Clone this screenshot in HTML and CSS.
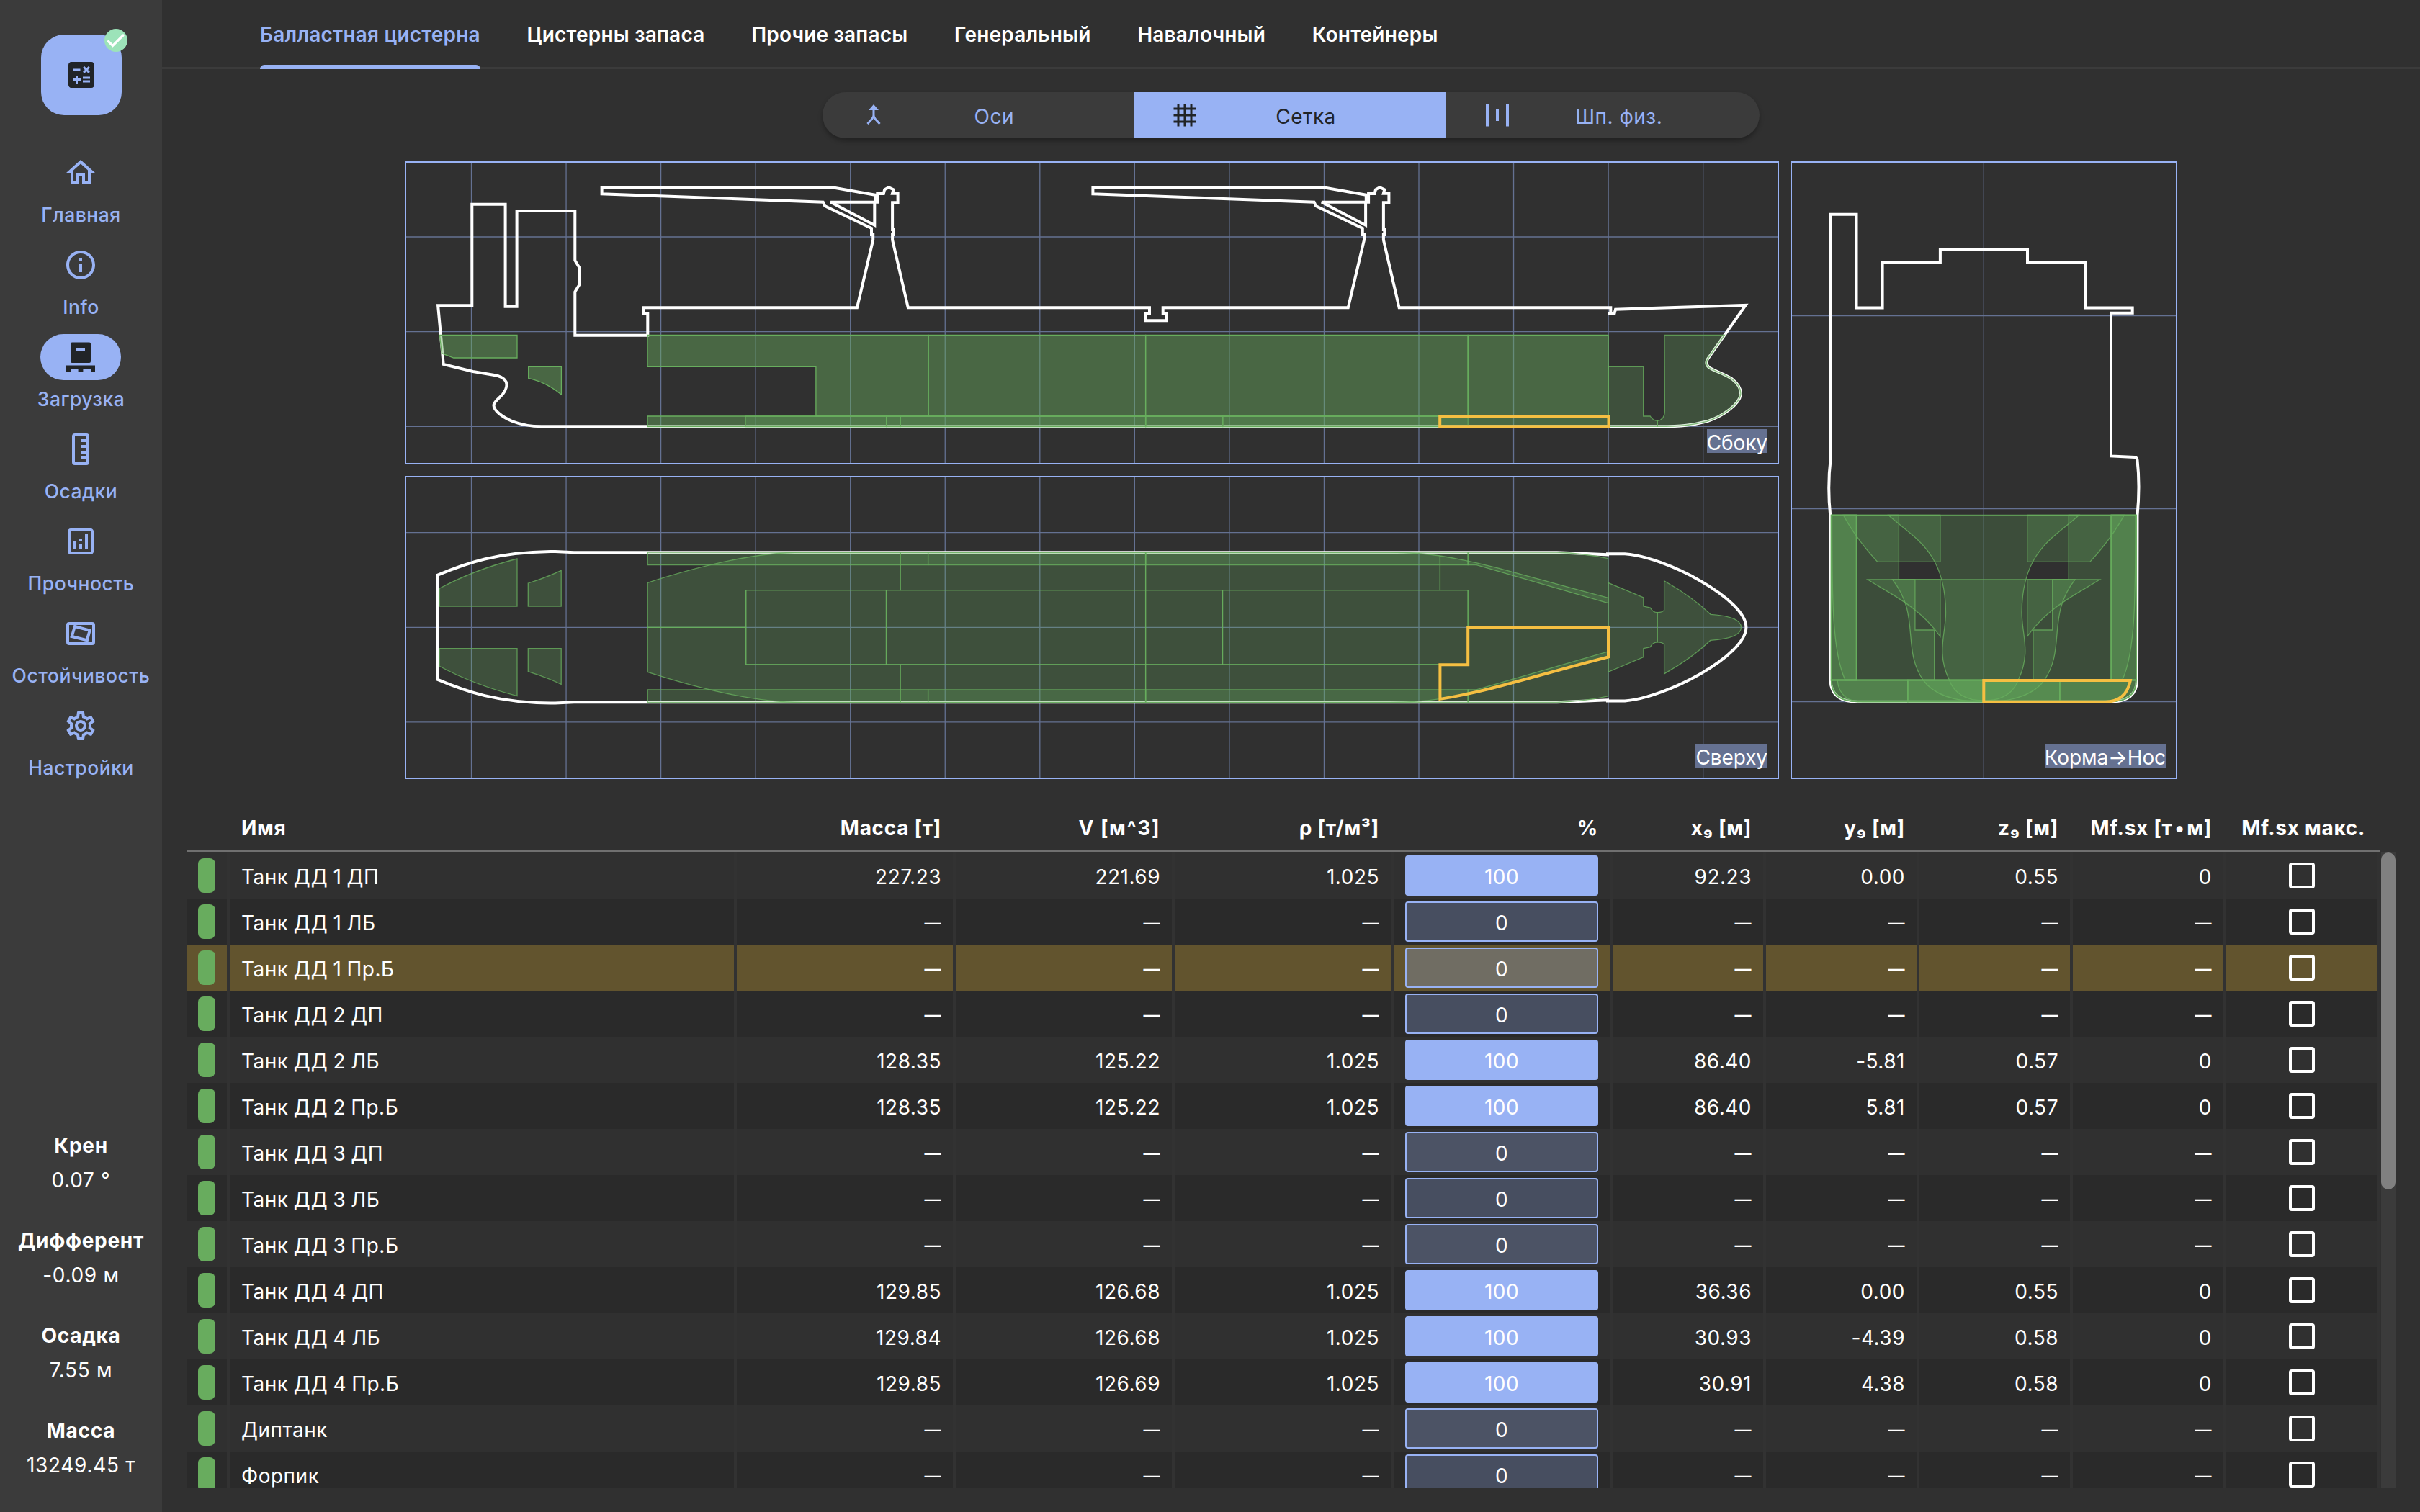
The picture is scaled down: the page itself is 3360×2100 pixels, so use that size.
FILE: index.html
```html
<!DOCTYPE html>
<html lang="ru">
<head>
<meta charset="utf-8">
<title>Загрузка</title>
<link rel="stylesheet" href="styles.css">
</head>
<body>
<div class="app">
  <aside class="rail">
    <button class="calc">
      <svg class="icon" viewBox="0 0 24 24"><path d="M19 3H5c-1.1 0-2 .9-2 2v14c0 1.1.9 2 2 2h14c1.1 0 2-.9 2-2V5c0-1.1-.9-2-2-2zm-5.97 4.06L14.09 6l1.41 1.41L16.91 6l1.06 1.06-1.41 1.41 1.41 1.41-1.06 1.06-1.41-1.4-1.41 1.41-1.06-1.06 1.41-1.41-1.41-1.42zm-6.78.66h5v1.5h-5v-1.5zM11.5 16h-2v2H8v-2H6v-1.5h2v-2h1.5v2h2V16zm6.5 1.25h-5v-1.5h5v1.5zm0-2.5h-5v-1.5h5v1.5z"/></svg>
      <svg class="badge" viewBox="0 0 32 32"><circle cx="16" cy="16" r="16" fill="#9ce3b9"/><path d="M5.500 17.500l6 6L26 9" fill="none" stroke="#fff" stroke-width="3.200" stroke-linecap="round"/></svg>
    </button>
    <nav class="nav">
      <a class="nav-item"><span class="pill"><svg class="icon" viewBox="0 0 24 24"><path d="M12 5.69l5 4.5V18h-2v-6H9v6H7v-7.81l5-4.5M12 3L2 12h3v8h6v-6h2v6h6v-8h3L12 3z"/></svg></span><span class="nav-label">Главная</span></a>
      <a class="nav-item"><span class="pill"><svg class="icon" viewBox="0 0 24 24"><path d="M11 7h2v2h-2zm0 4h2v6h-2zm1-9C6.48 2 2 6.48 2 12s4.48 10 10 10 10-4.48 10-10S17.52 2 12 2zm0 18c-4.41 0-8-3.59-8-8s3.59-8 8-8 8 3.59 8 8-3.59 8-8 8z"/></svg></span><span class="nav-label">Info</span></a>
      <a class="nav-item active"><span class="pill"><svg class="icon" viewBox="0 0 24 24"><path fill-rule="evenodd" d="M6 1.800h12q1 0 1 1v12.200q0 1-1 1H6q-1 0-1-1V2.800q0-1 1-1zM9 6v2h6V6zM2 22v-4.200h20V22h-3v-2h-5.300v2h-3.400v-2H5v2z"/></svg></span><span class="nav-label">Загрузка</span></a>
      <a class="nav-item"><span class="pill"><svg class="icon" viewBox="0 0 24 24"><path fill-rule="evenodd" d="M8 1h8q2 0 2 2v18q0 2-2 2H8q-2 0-2-2V3q0-2 2-2zM8 3v18h8v-2h-4v-2h4v-2h-4v-2h4v-2h-4V9h4V7h-4V5h4V3z"/></svg></span><span class="nav-label">Осадки</span></a>
      <a class="nav-item"><span class="pill"><svg class="icon" viewBox="0 0 24 24"><path d="M19 3H5c-1.1 0-2 .9-2 2v14c0 1.1.9 2 2 2h14c1.1 0 2-.9 2-2V5c0-1.1-.9-2-2-2zm0 16H5V5h14v14zM7 12h2v5H7zM15 7h2v10h-2zM11 14h2v3h-2zM11 10h2v2h-2z"/></svg></span><span class="nav-label">Прочность</span></a>
      <a class="nav-item"><span class="pill"><svg class="icon" viewBox="0 0 24 24"><path fill-rule="evenodd" d="M4 4h16q2 0 2 2v12q0 2-2 2H4q-2 0-2-2V6q0-2 2-2zm0 2v12h16V6z"/><path fill-rule="evenodd" d="M7.3 5.8l12.2 3.3-2.3 8.8-12.6-3.2zM8.6 8.3l-1.5 4.9 8.5 2.2 1.5-4.9z"/></svg></span><span class="nav-label">Остойчивость</span></a>
      <a class="nav-item"><span class="pill"><svg class="icon" viewBox="0 0 24 24"><path d="M19.43 12.98c.04-.32.07-.64.07-.98 0-.34-.03-.66-.07-.98l2.11-1.65c.19-.15.24-.42.12-.64l-2-3.46c-.09-.16-.26-.25-.44-.25-.06 0-.12.01-.17.03l-2.49 1c-.52-.4-1.08-.73-1.69-.98l-.38-2.65C14.46 2.18 14.25 2 14 2h-4c-.25 0-.46.18-.49.42l-.38 2.65c-.61.25-1.17.59-1.69.98l-2.49-1c-.06-.02-.12-.03-.18-.03-.17 0-.34.09-.43.25l-2 3.46c-.13.22-.07.49.12.64l2.11 1.65c-.04.32-.07.65-.07.98 0 .33.03.66.07.98l-2.11 1.65c-.19.15-.24.42-.12.64l2 3.46c.09.16.26.25.44.25.06 0 .12-.01.17-.03l2.49-1c.52.4 1.08.73 1.69.98l.38 2.65c.03.24.24.42.49.42h4c.25 0 .46-.18.49-.42l.38-2.65c.61-.25 1.17-.59 1.69-.98l2.49 1c.06.02.12.03.18.03.17 0 .34-.09.43-.25l2-3.46c.12-.22.07-.49-.12-.64l-2.11-1.65zm-1.98-1.71c.04.31.05.52.05.73 0 .21-.02.43-.05.73l-.14 1.13.89.7 1.08.84-.7 1.21-1.27-.51-1.04-.42-.9.68c-.43.32-.84.56-1.25.73l-1.06.43-.16 1.13-.2 1.35h-1.4l-.19-1.35-.16-1.13-1.06-.43c-.43-.18-.83-.41-1.23-.71l-.91-.7-1.06.43-1.27.51-.7-1.21 1.08-.84.89-.7-.14-1.13c-.03-.31-.05-.54-.05-.74s.02-.43.05-.73l.14-1.13-.89-.7-1.08-.84.7-1.21 1.27.51 1.04.42.9-.68c.43-.32.84-.56 1.25-.73l1.06-.43.16-1.13.2-1.35h1.39l.19 1.35.16 1.13 1.06.43c.43.18.83.41 1.23.71l.91.7 1.06-.43 1.27-.51.7 1.21-1.07.85-.89.7.14 1.13zM12 8c-2.21 0-4 1.79-4 4s1.79 4 4 4 4-1.79 4-4-1.79-4-4-4zm0 6c-1.1 0-2-.9-2-2s.9-2 2-2 2 .9 2 2-.9 2-2 2z"/></svg></span><span class="nav-label">Настройки</span></a>
    </nav>
    <dl class="stats">
      <div class="stat"><dt>Крен</dt><dd>0.07 °</dd></div>
      <div class="stat"><dt>Дифферент</dt><dd>-0.09 м</dd></div>
      <div class="stat"><dt>Осадка</dt><dd>7.55 м</dd></div>
      <div class="stat"><dt>Масса</dt><dd>13249.45 т</dd></div>
    </dl>
  </aside>

  <main class="main">
    <div class="tabs">
      <a class="tab active">Балластная цистерна</a>
      <a class="tab">Цистерны запаса</a>
      <a class="tab">Прочие запасы</a>
      <a class="tab">Генеральный</a>
      <a class="tab">Навалочный</a>
      <a class="tab">Контейнеры</a>
    </div>

    <div class="segments">
      <button class="segment"><svg class="seg-icon" viewBox="0 0 36 36"><path d="M18 5v14M18 18q0 3-2.500 5.500L9.500 30M18 18q0 3 2.500 5.500L26.500 30" fill="none" stroke="currentColor" stroke-width="3"/><path d="M18 3l7 8H11z" fill="currentColor"/></svg><span class="seg-text">Оси</span></button>
      <button class="segment on"><svg class="seg-icon" viewBox="0 0 36 36"><path d="M9 2.500v31M18 2.500v31M27 2.500v31M2.500 9h31M2.500 18h31M2.500 27h31" fill="none" stroke="currentColor" stroke-width="3"/></svg><span class="seg-text">Сетка</span></button>
      <button class="segment"><svg class="seg-icon" viewBox="0 0 36 36"><path d="M4 2.500v31M32 2.500v31M18 10v16" fill="none" stroke="currentColor" stroke-width="4"/></svg><span class="seg-text">Шп. физ.</span></button>
    </div>

    <section class="views">
      <!-- side elevation -->
      <figure class="view side">
        <svg viewBox="564 226 1904 417">
          <path class="grid" d="M654.500 224v421M786.050 224v421M917.600 224v421M1049.150 224v421M1180.700 224v421M1312.250 224v421M1443.800 224v421M1575.350 224v421M1706.900 224v421M1838.450 224v421M1970 224v421M2101.550 224v421M2233.100 224v421M2364.650 224v421M562 329h1908M562 460.700h1908M562 592.300h1908"/>
          <path class="hull" d="M608.100 424.300H655.300V283.700H701.600V425.700H717.600V293H798.300V361.700L804.500 371.700V395.300L798.300 405.300V465.700H899.300V435.300H893.600V427.300H1190L1212.200 333.300V326H1210V317L1145.200 286L1142.800 280.700L835.600 269.300V260.300H1155.600L1215 270.700V280.700H1153.200L1214.300 312.700V280.700H1218.300V269H1226.800L1228.200 263.300L1233.900 260.300L1240.500 263.300L1239 268.800H1246.600V281.300H1239.100V319H1240.500V326H1239.100V333.300L1260.800 427.300H1596V435.700H1590.600V445.300H1619.600V435.700H1614.700V427.300H1871.800L1894 333.300V326H1891.800V317L1827 286L1824.600 280.700L1517.400 269.300V260.300H1837.400L1896.800 270.700V280.700H1835L1896.100 312.700V280.700H1900.100V269H1908.600L1910 263.300L1915.700 260.300L1922.300 263.300L1920.800 268.800H1928.400V281.300H1920.900V319H1922.300V326H1920.900V333.300L1942.600 427.300H2236.300V435.700H2232.500H2241.400L2243 429.700L2423.700 424L2371 498.500C2368.500 503 2368.500 507 2373 510.500C2382 516 2395 519.500 2405 526.500C2414 533.500 2417.500 541 2416.800 548C2415 561 2393 578 2370 585.300C2350 590.500 2335 592.300 2305 592.300H752C740 592.300 725 590.500 711 585C697 579 685.500 570 685.500 563C685.500 558 692 554 698 547.500C702.500 542 704.500 535 702.500 530C700 524.500 694 522 685 520.700L656.700 516L615.700 506Z"/>
          <g class="tank pair">
            <path d="M610.500 465.500H718V497H629.800L613.300 490.700Z"/>
            <path d="M733.700 509.300H779.400V548Q757 530 733.700 525.300Z"/>
            <path d="M899 465.500H1289V578H1132.900V509.300H899Z"/>
            <path d="M1289 465.500H1590.600V578H1289Z"/>
            <path d="M1590.600 465.500H2038.200V578H1590.600Z"/>
            <path d="M2038.200 465.500H2233.100V578H2038.200Z"/>
            <path d="M899 578H1250V592.500H899Z"/>
            <path d="M1250 578H1590.600V592.500H1250Z"/>
            <path d="M1590.600 578H1999.200V592.500H1590.600Z"/>
            <path d="M1999.200 578H2233.100V592.500H1999.200Z"/>
          </g>
          <g class="tank">
            <path d="M1035.200 578H1230.600V592.500H1035.200Z"/>
            <path d="M1230.600 578H1590.600V592.500H1230.600Z"/>
            <path d="M1590.600 578H1697.800V592.500H1590.600Z"/>
            <path d="M1697.800 578H2038.200V592.500H1697.800Z"/>
            <path d="M2233.100 509.300H2281.700V578H2291.200Q2295 584.300 2301.100 584.300V592.300H2233.100Z"/>
            <path d="M2311 465.500H2394.500L2371 498.500C2368.500 503 2368.500 507 2373 510.500C2382 516 2395 519.500 2405 526.500C2414 533.500 2417.500 541 2416.800 548C2415 561 2393 578 2370 585.300C2350 590.500 2335 592.300 2301.100 592.300V584.300Q2311 583.500 2311.400 571Z"/>
          </g>
          <path class="selected" d="M1999.200 578H2233.500V592.300H1999.200Z"/>
        </svg>
        <figcaption>Сбоку</figcaption>
      </figure>

      <!-- plan -->
      <figure class="view plan">
        <svg viewBox="564 663 1904 417">
          <path class="grid" d="M654.500 661v421M786.050 661v421M917.600 661v421M1049.150 661v421M1180.700 661v421M1312.250 661v421M1443.800 661v421M1575.350 661v421M1706.900 661v421M1838.450 661v421M1970 661v421M2101.550 661v421M2233.100 661v421M2364.650 661v421M562 739.700h1908M562 871.300h1908M562 1002.900h1908"/>
          <path class="hull" d="M607.800 798.700C645 783 690 766 771 766L797 767.300H2162L2232 770.300V769.200H2256C2312 773 2424.400 832 2424.400 871.300S2312 969.600 2256 973.400H2232V972.300L2162 975.300H797L771 976.600C690 976.600 645 959.600 607.800 943.900Z"/>
          <g class="tank">
            <path d="M610.200 817.300Q658 791.500 718 776V842H610.200Z"/>
            <path d="M610.200 925.300Q658 951.100 718 966.600V900.600H610.200Z"/>
            <path d="M733.300 810Q756 803 779.200 792.300V842H733.300Z"/>
            <path d="M733.300 932.600Q756 939.600 779.200 950.300V900.600H733.300Z"/>
            <!-- wing tanks -->
            <path d="M899.200 767H1288.600V784.700H899.200Z"/>
            <path d="M1288.600 767H1590.600V784.700H1288.600Z"/>
            <path d="M1590.600 767H2038.200V784.700H1590.600Z"/>
            <path d="M2038.200 767H2161Q2200 768.500 2232.800 775.700V837.700L2050 784.700H2038.200Z"/>
            <path d="M899.200 975.600H1288.600V957.900H899.200Z"/>
            <path d="M1288.600 975.600H1590.600V957.900H1288.600Z"/>
            <path d="M1590.600 975.600H2038.200V957.900H1590.600Z"/>
            <path d="M2038.200 975.600H2161Q2200 974.100 2232.800 966.900V904.900L2050 957.900H2038.200Z"/>
            <!-- double bottom, sides -->
            <path d="M899.200 809.300Q1030 767 1114 767H1250V819.700H1035.700V871.300H899.200Z"/>
            <path d="M1250 767H1590.600V819.700H1250Z"/>
            <path d="M1590.600 767H1930Q1970 767.500 1999.400 772V819.700H1590.600Z"/>
            <path d="M1999.400 772C2070 783 2130 804 2232.800 830.300V871.300H2038.200V819.700H1999.400Z"/>
            <path d="M899.200 933.300Q1030 975.600 1114 975.600H1250V922.900H1035.700V871.300H899.200Z"/>
            <path d="M1250 975.600H1590.600V922.900H1250Z"/>
            <path d="M1590.600 975.600H1930Q1970 975.100 1999.400 970.600V922.900H1590.600Z"/>
            <path d="M1999.400 970.600C2070 959.600 2130 938.600 2232.800 912.300V871.300H2038.200V922.900H1999.400Z"/>
            <!-- double bottom, centre -->
            <path d="M1035.700 819.700H1230.500V922.900H1035.700Z"/>
            <path d="M1230.500 819.700H1590.600V922.900H1230.500Z"/>
            <path d="M1590.600 819.700H1697.500V922.900H1590.600Z"/>
            <path d="M1697.500 819.700H2038.200V922.900H1697.500Z"/>
            <!-- fore tanks -->
            <path d="M2232.800 809.300L2281.900 830V842L2291.300 844Q2295 850.700 2301 850.700V891.900Q2295 891.900 2291.300 898.600L2281.900 900.600V912.600L2232.800 933.300Z"/>
            <path d="M2301 850.700Q2309 850.500 2310.600 847.300V806.700Q2350 829 2375 853.300Q2417.500 856 2417.500 871.300T2375 889.300Q2350 913.600 2310.600 935.900V895.300Q2309 892.100 2301 891.900Z"/>
          </g>
          <path class="selected" d="M2038.200 871.300H2233V912.500C2130 938.600 2070 959.600 1999.400 970.900V923.300H2038.200Z"/>
        </svg>
        <figcaption>Сверху</figcaption>
      </figure>

      <!-- section, stern to bow -->
      <figure class="view section">
        <svg viewBox="2488 226 533 854">
          <path class="grid" d="M2754.300 224v858M2486 438.600h537M2486 706.700h537M2486 974.700h537"/>
          <path class="hull" d="M2541.800 636V297.700H2577.500V427.500H2613.600V364.800H2693.900V346H2815V364.800H2895V427.500H2960.700V434.700H2931V633.400L2964 635Q2967 635.500 2967.500 639Q2971.500 675 2967.500 715.500L2967 944Q2967 974.700 2929 974.700H2579.600Q2541.600 974.700 2541.600 944L2541.200 715.500Q2537 675 2541.800 636Z"/>
          <defs>
            <g id="half">
              <path d="M2559.300 715.500Q2577 748 2606.800 780.400H2693.900V715.500Z"/>
              <path d="M2592.900 804.800C2625 825 2665 843 2693.900 884V804.800Z"/>
              <path d="M2542.500 715.500H2577.500V944.500H2542.500Z"/>
              <path d="M2542.500 715.500H2577.500V944.500H2542.500Z"/>
              <path d="M2542.500 715.500H2577.500V944.500H2542.500Z"/>
              <path d="M2543.600 715.500H2636.400V804.800H2658.900V875H2685.700V944.500H2562C2543.600 905 2543.600 830 2543.600 715.500Z"/>
              <path d="M2542.500 944.500H2754.300V974.700H2579.600Q2542.500 974.700 2542.500 944.500Z"/>
              <path d="M2542.500 944.500H2648.800V974.700H2579.600Q2542.500 974.700 2542.500 944.500Z"/>
              <path d="M2542.500 944.500H2648.800V974.700H2579.600Q2542.500 974.700 2542.500 944.500Z"/>
              <path d="M2551 944.500H2754.300V974.700H2586Q2554 974.700 2551 944.500Z"/>
            </g>
          </defs>
          <g class="tank stacked">
            <use href="#half"/>
            <use href="#half" transform="translate(5508.600 0) scale(-1 1)"/>
            <path d="M2648.800 944.500H2859.800V974.700H2648.800Z"/>
            <path d="M2648.800 944.500H2859.800V974.700H2648.800Z"/>
            <path d="M2648.800 944.500H2859.800V974.700H2648.800Z"/>
            <path d="M2627.500 804.800C2667 855 2640 900 2670 944.500Q2692 974.700 2754.300 974.700T2838.600 944.500C2868.600 900 2841.600 855 2881.100 804.800Z"/>
            <path d="M2622 715.500C2656 746 2701 765 2701.500 850C2702 880 2688 905 2706 943.500C2712 960 2725 973 2754.300 973S2796.600 960 2802.600 943.500C2820.600 905 2806.600 880 2807.100 850C2807.600 765 2852.600 746 2886.600 715.500Z"/>
          </g>
          <path class="selected" d="M2754.300 945H2957.900Q2952 974.700 2922.900 974.700H2754.300Z"/>
        </svg>
        <figcaption>Корма→Нос</figcaption>
      </figure>
    </section>

    <section class="table-area">
      <div class="thead row"><span></span><span>Имя</span><span>Масса [т]</span><span class="wide">V [м^3]</span><span>ρ [т/м³]</span><span>%</span><span>x₉ [м]</span><span>y₉ [м]</span><span>z₉ [м]</span><span>Mf.sx [т&#8202;•&#8202;м]</span><span>Mf.sx макс.</span></div>
      <div class="body-wrap">
        <div class="tbody">
          <div class="row"><span><i class="mark"></i></span><span>Танк ДД 1 ДП</span><span>227.23</span><span>221.69</span><span>1.025</span><span><b class="fill full">100</b></span><span>92.23</span><span>0.00</span><span>0.55</span><span>0</span><span><i class="check"></i></span></div>
          <div class="row empty"><span><i class="mark"></i></span><span>Танк ДД 1 ЛБ</span><span>—</span><span>—</span><span>—</span><span><b class="fill">0</b></span><span>—</span><span>—</span><span>—</span><span>—</span><span><i class="check"></i></span></div>
          <div class="row empty picked"><span><i class="mark"></i></span><span>Танк ДД 1 Пр.Б</span><span>—</span><span>—</span><span>—</span><span><b class="fill">0</b></span><span>—</span><span>—</span><span>—</span><span>—</span><span><i class="check"></i></span></div>
          <div class="row empty"><span><i class="mark"></i></span><span>Танк ДД 2 ДП</span><span>—</span><span>—</span><span>—</span><span><b class="fill">0</b></span><span>—</span><span>—</span><span>—</span><span>—</span><span><i class="check"></i></span></div>
          <div class="row"><span><i class="mark"></i></span><span>Танк ДД 2 ЛБ</span><span>128.35</span><span>125.22</span><span>1.025</span><span><b class="fill full">100</b></span><span>86.40</span><span>-5.81</span><span>0.57</span><span>0</span><span><i class="check"></i></span></div>
          <div class="row"><span><i class="mark"></i></span><span>Танк ДД 2 Пр.Б</span><span>128.35</span><span>125.22</span><span>1.025</span><span><b class="fill full">100</b></span><span>86.40</span><span>5.81</span><span>0.57</span><span>0</span><span><i class="check"></i></span></div>
          <div class="row empty"><span><i class="mark"></i></span><span>Танк ДД 3 ДП</span><span>—</span><span>—</span><span>—</span><span><b class="fill">0</b></span><span>—</span><span>—</span><span>—</span><span>—</span><span><i class="check"></i></span></div>
          <div class="row empty"><span><i class="mark"></i></span><span>Танк ДД 3 ЛБ</span><span>—</span><span>—</span><span>—</span><span><b class="fill">0</b></span><span>—</span><span>—</span><span>—</span><span>—</span><span><i class="check"></i></span></div>
          <div class="row empty"><span><i class="mark"></i></span><span>Танк ДД 3 Пр.Б</span><span>—</span><span>—</span><span>—</span><span><b class="fill">0</b></span><span>—</span><span>—</span><span>—</span><span>—</span><span><i class="check"></i></span></div>
          <div class="row"><span><i class="mark"></i></span><span>Танк ДД 4 ДП</span><span>129.85</span><span>126.68</span><span>1.025</span><span><b class="fill full">100</b></span><span>36.36</span><span>0.00</span><span>0.55</span><span>0</span><span><i class="check"></i></span></div>
          <div class="row"><span><i class="mark"></i></span><span>Танк ДД 4 ЛБ</span><span>129.84</span><span>126.68</span><span>1.025</span><span><b class="fill full">100</b></span><span>30.93</span><span>-4.39</span><span>0.58</span><span>0</span><span><i class="check"></i></span></div>
          <div class="row"><span><i class="mark"></i></span><span>Танк ДД 4 Пр.Б</span><span>129.85</span><span>126.69</span><span>1.025</span><span><b class="fill full">100</b></span><span>30.91</span><span>4.38</span><span>0.58</span><span>0</span><span><i class="check"></i></span></div>
          <div class="row empty"><span><i class="mark"></i></span><span>Диптанк</span><span>—</span><span>—</span><span>—</span><span><b class="fill">0</b></span><span>—</span><span>—</span><span>—</span><span>—</span><span><i class="check"></i></span></div>
          <div class="row empty"><span><i class="mark"></i></span><span>Форпик</span><span>—</span><span>—</span><span>—</span><span><b class="fill">0</b></span><span>—</span><span>—</span><span>—</span><span>—</span><span><i class="check"></i></span></div>
        </div>
        <div class="track"><div class="thumb"></div></div>
      </div>
    </section>
  </main>
</div>
</body>
</html>
```

FILE: styles.css
```css
:root {
  --bg: #303030;
  --rail: #3b3b3b;
  --accent: #98b2f4;
  --ink: #212427;
  --green: #68ac5e;
  --amber: #f5bf42;
}
* { box-sizing: border-box; }
body {
  margin: 0;
  background: var(--bg);
  color: #fff;
  font: 400 28px/34px Inter, "Noto Sans", sans-serif;
  letter-spacing: 0.5px;
}
button {
  font: inherit;
  letter-spacing: inherit;
  border: 0;
  padding: 0;
}
.app {
  display: flex;
  width: 3360px;
  height: 2100px;
  overflow: hidden;
}

/* navigation rail */
.rail {
  flex: none;
  width: 225px;
  background: var(--rail);
  display: flex;
  flex-direction: column;
  align-items: center;
  padding: 48px 0 48px;
}
.calc {
  position: relative;
  flex: none;
  width: 112px;
  height: 112px;
  border-radius: 32px;
  background: var(--accent);
  color: var(--ink);
  display: grid;
  place-items: center;
}
.badge {
  position: absolute;
  top: -8px;
  right: -8px;
  width: 32px;
  height: 32px;
}
.icon {
  display: block;
  width: 48px;
  height: 48px;
  fill: currentColor;
}
.nav {
  margin-top: 48px;
  color: var(--accent);
  font-size: 26.5px;
  font-weight: 500;
}
.nav-item {
  display: flex;
  flex-direction: column;
  align-items: center;
  gap: 9px;
  height: 128px;
}
.pill {
  width: 112px;
  height: 64px;
  border-radius: 32px;
  display: grid;
  place-items: center;
}
.active .pill {
  background: var(--accent);
  color: var(--ink);
}
.nav-label { white-space: nowrap; }
.stats {
  margin: auto 0 0;
  text-align: center;
  letter-spacing: 0.7px;
  display: flex;
  flex-direction: column;
  gap: 50px;
}
.stat {
  display: flex;
  flex-direction: column;
  gap: 14px;
}
.stat dt { font-weight: 700; }
.stat dd { margin: 0; }

/* main column */
.main {
  flex: 1;
  min-width: 0;
  display: flex;
  flex-direction: column;
}
.tabs {
  flex: none;
  height: 96px;
  border-bottom: 3px solid #3b3b3b;
  display: flex;
  gap: 64.7px;
  padding-left: 136px;
  font-weight: 600;
  letter-spacing: 0.2px;
}
.tab {
  height: 96px;
  line-height: 97px;
  white-space: nowrap;
}
.tab.active {
  color: var(--accent);
  display: flex;
  flex-direction: column;
}
.tab.active::after {
  content: "";
  height: 6px;
  margin-top: -7px;
  border-radius: 6px 6px 0 0;
  background: var(--accent);
}
.segments {
  flex: none;
  align-self: center;
  display: grid;
  grid-template-columns: 431.5px 434px 435.5px;
  height: 64px;
  margin-top: 32px;
  border-radius: 32px;
  overflow: hidden;
  background: var(--rail);
  box-shadow: 0 4px 6px rgba(0, 0, 0, 0.3);
}
.segment {
  display: flex;
  align-items: center;
  padding: 0 44px 0 53px;
  background: none;
  color: var(--accent);
}
.segment.on {
  background: var(--accent);
  color: var(--ink);
}
.seg-icon {
  width: 36px;
  height: 36px;
}
.seg-text {
  flex: 1;
  padding-top: 4px;
}

/* ship views */
.views {
  flex: none;
  align-self: center;
  display: grid;
  grid-template: 421px 421px / 1908px 537px;
  gap: 16px;
  margin-top: 32px;
}
.view {
  position: relative;
  margin: 0;
  border: 2px solid var(--accent);
}
.section {
  grid-area: 1 / 2 / 3 / 3;
}
.view svg {
  display: block;
  width: 100%;
  height: 100%;
}
.view figcaption {
  position: absolute;
  right: 14px;
  bottom: 14px;
  padding-top: 5px;
  background: #657191;
  letter-spacing: -0.1px;
  line-height: 28px;
}
.grid {
  fill: none;
  stroke: rgba(152, 178, 244, 0.5);
  stroke-width: 1.3;
}
.hull {
  fill: none;
  stroke: #fff;
  stroke-width: 4;
}
.tank {
  fill: rgba(104, 174, 94, 0.25);
  stroke: rgba(104, 174, 94, 0.8);
  stroke-width: 1.3;
}
.tank.pair {
  fill: rgba(104, 174, 94, 0.44);
  stroke: rgba(104, 174, 94, 1);
}
.tank.stacked { fill: rgba(104, 174, 94, 0.235); }
.selected {
  fill: none;
  stroke: var(--amber);
  stroke-width: 4;
}

/* table */
.table-area {
  flex: none;
  margin: 34px 34px 0;
  width: 3067px;
}
.row {
  display: grid;
  grid-template-columns: 60px 704px 304px 304px 304px 304px 213px 213px 213px 213px 213px;
  width: 3045px;
  height: 64px;
}
.row > span {
  display: flex;
  align-items: center;
  justify-content: flex-end;
  padding: 4px 16px 0;
  border-right: 4px solid #323232;
  white-space: nowrap;
}
.row > span:nth-child(2) {
  justify-content: flex-start;
  word-spacing: -1.2px;
}
.row > span:first-child,
.row > span:last-child {
  justify-content: center;
  padding: 0;
}
.thead {
  height: 68px;
  border-bottom: 4px solid #707070;
  font-weight: 700;
  letter-spacing: 0.7px;
}
.thead > span { border-color: transparent; }
.thead > .wide { letter-spacing: 1.5px; }
.row.thead > span:last-child {
  justify-content: flex-end;
  padding: 4px 16px 0;
}
.body-wrap {
  display: flex;
  height: 882px;
  overflow: hidden;
}
.tbody { flex: none; }
.tbody .row:nth-child(even) { background: #2a2a2a; }
.tbody .row.picked { background: #62542e; }
.tbody .row > span:nth-child(6) { padding: 4px 16px; }
.empty > span:nth-child(n + 3):not(:nth-child(6)) {
  font-size: 23px;
  font-weight: 500;
}
.mark {
  width: 24px;
  height: 48px;
  border-radius: 8px;
  background: var(--green);
}
.fill {
  width: 100%;
  height: 56px;
  padding-top: 2px;
  border: 2px solid var(--accent);
  border-radius: 4px;
  background: rgba(152, 178, 244, 0.27);
  font-weight: 400;
  line-height: 52px;
  text-align: center;
}
.fill.full { background: var(--accent); }
.check {
  width: 36px;
  height: 36px;
  border: 4px solid #fff;
  border-radius: 4px;
}
.track {
  flex: none;
  width: 20px;
  margin-left: 2px;
  background: #3b3b3b;
}
.thumb {
  height: 468px;
  border-radius: 10px;
  background: #808080;
}
```
